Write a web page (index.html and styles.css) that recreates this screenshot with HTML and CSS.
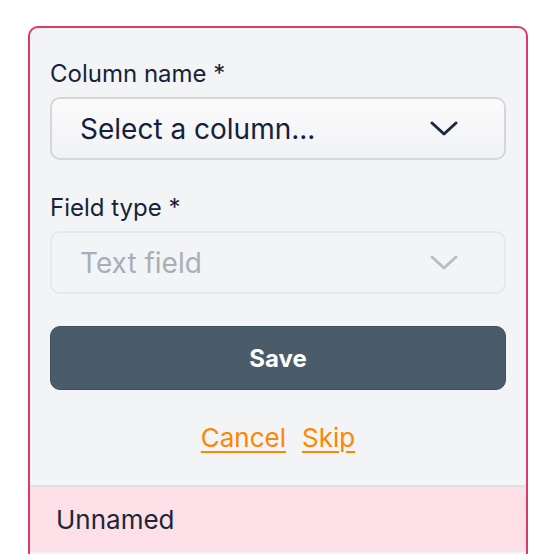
FILE: index.html
```html
<!DOCTYPE html>
<html>
<head>
<meta charset="utf-8">
<link rel="stylesheet" href="styles.css">
</head>
<body>
<div class="card">
  <div class="form">
    <div class="field">
      <div class="label">Column name *</div>
      <div class="select">
        <span class="value">Select a column...</span>
        <svg class="chevron" width="28" height="16" viewBox="0 0 28 16"><path d="M2 2 L14 13 L26 2" fill="none" stroke="currentColor" stroke-width="3" stroke-linecap="round" stroke-linejoin="round"/></svg>
      </div>
    </div>
    <div class="field">
      <div class="label">Field type *</div>
      <div class="select disabled">
        <span class="value">Text field</span>
        <svg class="chevron" width="28" height="16" viewBox="0 0 28 16"><path d="M2 2 L14 13 L26 2" fill="none" stroke="currentColor" stroke-width="3" stroke-linecap="round" stroke-linejoin="round"/></svg>
      </div>
    </div>
    <button class="save">Save</button>
    <div class="links">
      <a class="link" href="#">Cancel</a>
      <a class="link" href="#">Skip</a>
    </div>
  </div>
  <div class="footer">Unnamed</div>
</div>
</body>
</html>
```
FILE: styles.css
```css
html, body {
  margin: 0;
  padding: 0;
  background: #ffffff;
}
body {
  font-family: Inter, "Noto Sans", sans-serif;
  color: #1b2638;
}
.card {
  margin: 26px 0 0 28px;
  width: 500px;
  box-sizing: border-box;
  border: 2px solid #dc3a6c;
  border-radius: 10px;
  background: #f3f4f6;
  overflow: hidden;
  height: 540px;
}
.form {
  padding: 30px 20px 31px 20px;
  display: flex;
  flex-direction: column;
}
.field {
  display: flex;
  flex-direction: column;
  margin-bottom: 32px;
}
.label {
  font-size: 24px;
  font-weight: 400;
  line-height: 32px;
  margin-bottom: 7px;
  color: #17233a;
}
.select {
  height: 63px;
  box-sizing: border-box;
  border: 2px solid #d4d6da;
  border-radius: 10px;
  background: linear-gradient(#fbfbfc, #f1f2f4);
  display: flex;
  align-items: center;
  justify-content: space-between;
  padding: 0 46px 0 28px;
  color: #14213a;
}
.select .value {
  font-size: 28px;
}
.select .chevron {
  color: #1c2a40;
}
.select.disabled {
  border-color: #e6e8eb;
  background: #f3f4f6;
  color: #a9afb7;
}
.select.disabled .chevron {
  color: #b9bec5;
}
.save {
  height: 64px;
  border: 1px solid #42505e;
  border-radius: 10px;
  background: #4a5b6a;
  color: #ffffff;
  font-family: Inter, "Noto Sans", sans-serif;
  font-weight: 700;
  font-size: 24px;
  margin-top: 0;
}
.links {
  display: flex;
  justify-content: center;
  gap: 16px;
  margin-top: 32px;
}
.link {
  color: #ff8600;
  font-size: 26px;
  line-height: 32px;
  text-decoration: underline;
  text-underline-offset: 4px;
}
.footer {
  border-top: 2px solid #dbe1e5;
  background: #fcdfe7;
  padding: 17px 26px;
  font-size: 26px;
  color: #1b2638;
}
```
